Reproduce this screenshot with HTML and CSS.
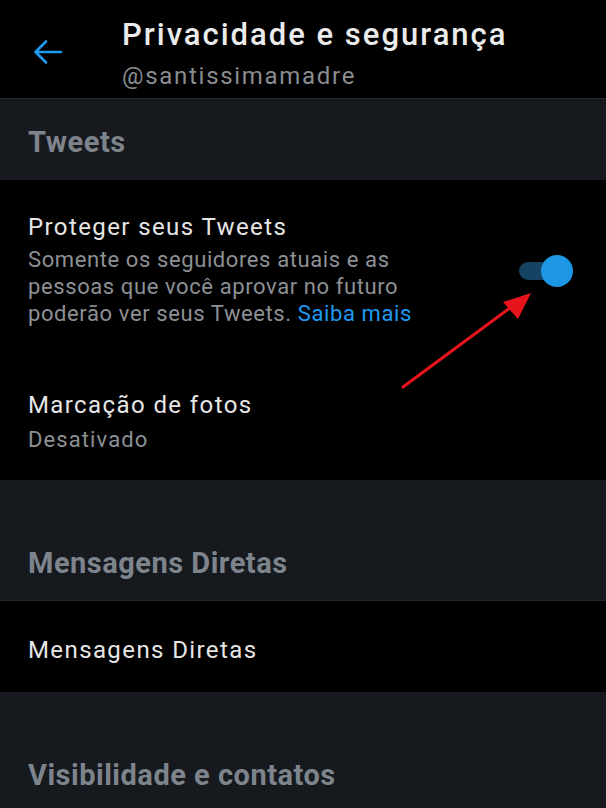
FILE: index.html
```html
<!DOCTYPE html>
<html lang="pt">
<head>
<meta charset="utf-8">
<link rel="stylesheet" href="styles.css">
</head>
<body>
<div class="screen">
  <header class="topbar">
    <div class="back">
      <svg width="30" height="26" viewBox="0 0 30 26"><path d="M28 13H3M13 2.5L2.5 13L13 23.5" fill="none" stroke="#1d9bf0" stroke-width="2.6" stroke-linecap="round" stroke-linejoin="round"/></svg>
    </div>
    <div class="titles">
      <div class="title">Privacidade e segurança</div>
      <div class="handle">@santissimamadre</div>
    </div>
  </header>

  <div class="section-head first">Tweets</div>

  <div class="group">
    <div class="item protect">
      <div class="item-text">
        <div class="item-title">Proteger seus Tweets</div>
        <p class="item-desc">Somente os seguidores atuais e as pessoas que você aprovar no futuro poderão ver seus Tweets. <a class="link">Saiba mais</a></p>
      </div>
      <div class="toggle"><span class="track"></span><span class="thumb"></span></div>
    </div>
    <div class="item photos">
      <div class="item-title">Marcação de fotos</div>
      <div class="item-sub">Desativado</div>
    </div>
  </div>

  <div class="section-head mid">Mensagens Diretas</div>

  <div class="group">
    <div class="item single">
      <div class="item-title">Mensagens Diretas</div>
    </div>
  </div>

  <div class="section-head last">Visibilidade e contatos</div>

  <svg class="annot" width="606" height="808" viewBox="0 0 606 808">
    <line x1="403" y1="387" x2="518" y2="302" stroke="#e8141c" stroke-width="3" stroke-linecap="round"/>
    <polygon points="531,293 503,302 518,319" fill="#e8141c"/>
  </svg>
</div>
</body>
</html>
```

FILE: styles.css
```css
* { box-sizing: border-box; }
html, body { margin: 0; padding: 0; background: #000; }
body { font-family: Roboto, "Noto Sans", sans-serif; }

.screen {
  position: relative;
  width: 606px;
  height: 808px;
  overflow: hidden;
  background: #000;
}

.topbar {
  height: 99px;
  display: flex;
  align-items: flex-start;
  border-bottom: 1px solid #25292e;
}
.back {
  width: 122px;
  padding-left: 33px;
  padding-top: 39px;
}
.back svg { display: block; }
.titles { padding-top: 16px; }
.title {
  font-size: 31px;
  font-weight: 500;
  color: #ebebeb;
  line-height: 38px;
  letter-spacing: 2px;
  white-space: nowrap;
}
.handle {
  font-size: 24px;
  font-weight: 400;
  color: #898c90;
  line-height: 28px;
  letter-spacing: 1.7px;
  margin-top: 8px;
}

.section-head {
  background: #16191e;
  color: #7e848c;
  font-size: 29px;
  font-weight: 700;
  line-height: 34px;
  letter-spacing: 0.5px;
  padding-left: 28px;
  white-space: nowrap;
}
.section-head.first { height: 81px; padding-top: 26px; }
.section-head.mid {
  height: 121px;
  padding-top: 66px;
  border-bottom: 1px solid #24282d;
}
.section-head.last { height: 116px; padding-top: 66px; }

.group { background: #000; }
.item { padding-left: 28px; }
.item-title {
  font-size: 24px;
  color: #e6e6e6;
  line-height: 30px;
  letter-spacing: 1.4px;
  white-space: nowrap;
}
.protect {
  display: flex;
  align-items: flex-start;
  padding-top: 32px;
  padding-right: 33px;
}
.item-text { width: 400px; }
.item-desc {
  margin: 4px 0 0;
  font-size: 22px;
  color: #8d9094;
  line-height: 27px;
  letter-spacing: 0.6px;
}
.link { color: #1d9bf0; }

.toggle {
  position: relative;
  margin-left: auto;
  margin-top: 43px;
  width: 54px;
  height: 32px;
}
.track {
  position: absolute;
  left: 0;
  top: 7px;
  width: 42px;
  height: 18px;
  border-radius: 9px;
  background: #154463;
}
.thumb {
  position: absolute;
  right: 0;
  top: 0;
  width: 32px;
  height: 32px;
  border-radius: 50%;
  background: #1e96e6;
}

.photos {
  padding-top: 63px;
  padding-bottom: 27px;
}
.item-sub {
  font-size: 22px;
  color: #8d9094;
  line-height: 27px;
  letter-spacing: 1.1px;
  margin-top: 6px;
}

.single {
  height: 91px;
  padding-top: 34px;
}

.annot {
  position: absolute;
  left: 0;
  top: 0;
  pointer-events: none;
}
```
